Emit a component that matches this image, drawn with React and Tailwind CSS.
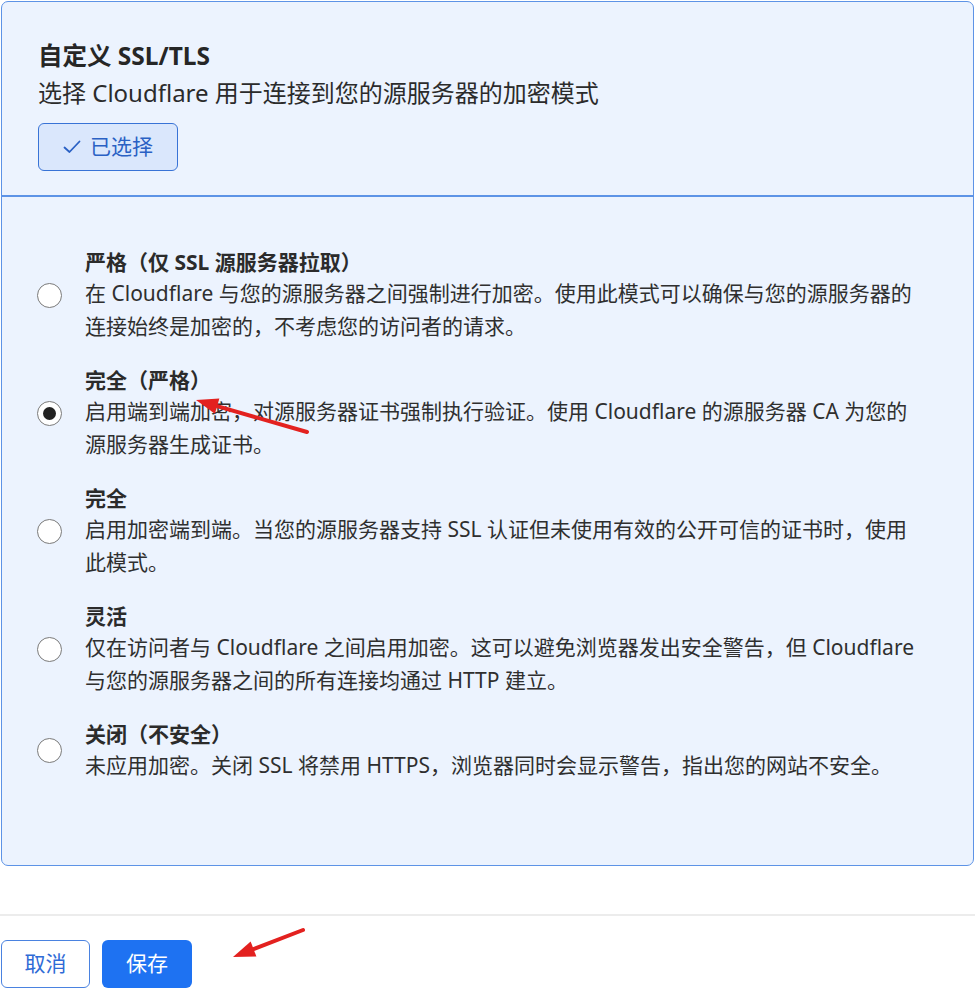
import React from "react";

const options = [
  {
    title: "严格（仅 SSL 源服务器拉取）",
    lines: [
      "在 Cloudflare 与您的源服务器之间强制进行加密。使用此模式可以确保与您的源服务器的",
      "连接始终是加密的，不考虑您的访问者的请求。",
    ],
  },
  {
    title: "完全（严格）",
    lines: [
      "启用端到端加密，对源服务器证书强制执行验证。使用 Cloudflare 的源服务器 CA 为您的",
      "源服务器生成证书。",
    ],
    checked: true,
  },
  {
    title: "完全",
    lines: [
      "启用加密端到端。当您的源服务器支持 SSL 认证但未使用有效的公开可信的证书时，使用",
      "此模式。",
    ],
  },
  {
    title: "灵活",
    lines: [
      "仅在访问者与 Cloudflare 之间启用加密。这可以避免浏览器发出安全警告，但 Cloudflare",
      "与您的源服务器之间的所有连接均通过 HTTP 建立。",
    ],
  },
  {
    title: "关闭（不安全）",
    lines: ["未应用加密。关闭 SSL 将禁用 HTTPS，浏览器同时会显示警告，指出您的网站不安全。"],
  },
];

function Arrow({ x1, y1, x2, y2 }) {
  const minX = Math.min(x1, x2) - 20;
  const minY = Math.min(y1, y2) - 20;
  const w = Math.abs(x1 - x2) + 40;
  const h = Math.abs(y1 - y2) + 40;
  const ang = Math.atan2(y2 - y1, x2 - x1);
  const L = 22;
  const W = 8;
  const bx = x2 - L * Math.cos(ang);
  const by = y2 - L * Math.sin(ang);
  const px = -Math.sin(ang) * W;
  const py = Math.cos(ang) * W;
  return (
    <svg
      className="absolute pointer-events-none"
      style={{ left: minX, top: minY, width: w, height: h }}
      viewBox={`${minX} ${minY} ${w} ${h}`}
    >
      <line x1={x1} y1={y1} x2={bx} y2={by} stroke="#e3211f" strokeWidth="4" strokeLinecap="round" />
      <polygon points={`${x2},${y2} ${bx + px},${by + py} ${bx - px},${by - py}`} fill="#e3211f" />
    </svg>
  );
}

export default function App() {
  return (
    <div
      className="relative w-[975px] h-[1007px] bg-white overflow-hidden text-[#2b2b2b]"
      style={{ fontFamily: '"Noto Sans", "Noto Sans CJK SC", sans-serif' }}
    >
      <div className="pt-[1px] px-[1px]">
        <div className="border border-[#5d93e6] rounded-[7px] bg-[#ecf3fe]">
          <div className="pl-[36px] pt-[38px] pb-[24px] border-b-2 border-[#5d93e6]">
            <div className="text-[24.5px] leading-[32px] font-bold text-[#262626]">自定义 SSL/TLS</div>
            <div className="text-[24px] leading-[32px] mt-[5px] text-[#2b2b2b]">选择 Cloudflare 用于连接到您的源服务器的加密模式</div>
            <button className="mt-[14px] h-[48px] w-[140px] flex items-center justify-center gap-[9px] rounded-[6px] border border-[#3873d6] bg-[#dae7fc] text-[#2a61c4] text-[21px]">
              <svg width="18" height="14" viewBox="0 0 18 14" fill="none">
                <path d="M1.5 7.5 L6.5 12 L16.5 1.5" stroke="#2a61c4" strokeWidth="1.8" strokeLinecap="round" strokeLinejoin="round" />
              </svg>
              <span>已选择</span>
            </button>
          </div>
          <div className="pl-[35px] pr-[20px] pt-[50px] pb-[83px] flex flex-col gap-[22px]">
            {options.map((o) => (
              <div key={o.title} className="flex items-center gap-[23px]">
                <div className="w-[25px] h-[25px] shrink-0 rounded-full border border-[#7a7a7a] bg-white flex items-center justify-center">
                  {o.checked && <div className="w-[13px] h-[13px] rounded-full bg-[#222]" />}
                </div>
                <div className="flex-1">
                  <div className="text-[21px] leading-[30px] font-bold text-[#2b2b2b]">{o.title}</div>
                  {o.lines.map((l) => (
                    <div key={l} className="text-[21px] leading-[33px] whitespace-nowrap text-[#2f2f2f]">{l}</div>
                  ))}
                </div>
              </div>
            ))}
          </div>
        </div>
      </div>
      <div className="mt-[48px] border-t-2 border-[#ececec] pt-[24px] flex gap-[12px] pl-[1px]">
        <button className="h-[48px] w-[89px] rounded-[6px] border border-[#4a82e0] bg-white text-[#2f6bd6] text-[21px]">取消</button>
        <button className="h-[48px] w-[90px] rounded-[6px] bg-[#1e72f2] text-white text-[21px]">保存</button>
      </div>
      <Arrow x1={307} y1={432} x2={196} y2={400} />
      <Arrow x1={303} y1={930} x2={233} y2={957} />
    </div>
  );
}
